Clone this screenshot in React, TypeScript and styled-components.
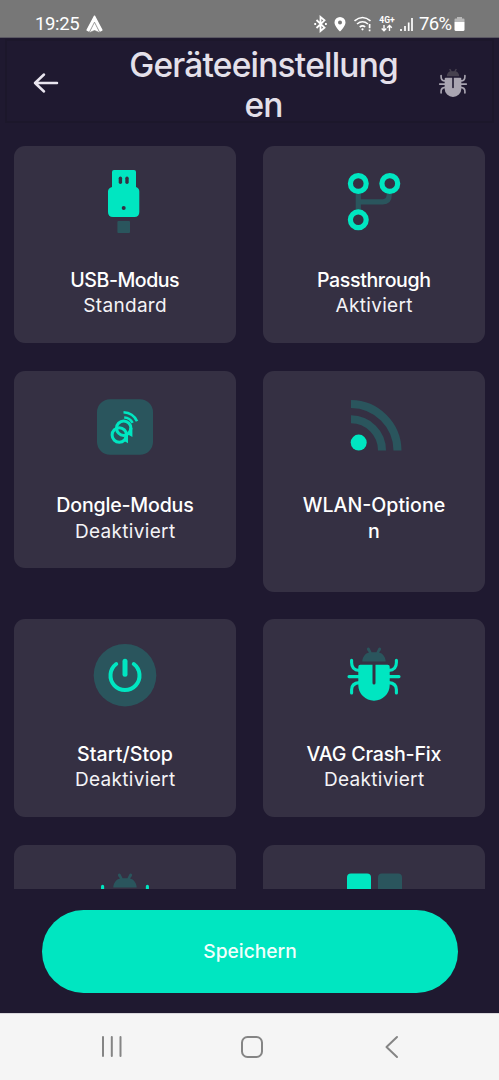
import React from 'react';
import styled, { createGlobalStyle } from 'styled-components';

const TEAL = '#00e6c1';
const DIM = '#2a555d';
const CARD = '#353043';
const BG = '#1f1930';

const Global = createGlobalStyle`
  * { box-sizing: border-box; }
  html, body { margin: 0; padding: 0; background: ${BG}; overflow: hidden; }
  svg { display: block; flex: none; }
`;

const Screen = styled.div`
  width: 499px;
  height: 1080px;
  display: flex;
  flex-direction: column;
  background: ${BG};
  color: #fff;
  font-family: Inter, 'Open Sans', sans-serif;
  overflow: hidden;
`;

const StatusBar = styled.div`
  height: 38px;
  flex: none;
  display: flex;
  align-items: center;
  padding: 10px 34px 0 35px;
  background: #777;
  border-bottom: 1px solid #5a5862;
  font-family: Roboto, sans-serif;
  font-size: 18.5px;
  line-height: 24px;
`;

const Clock = styled.span`
  width: 51px;
  letter-spacing: -0.35px;
  white-space: nowrap;
`;

const StatusGroup = styled.div`
  margin-left: auto;
  display: flex;
  align-items: center;
`;

const Battery = styled.span`
  width: 35px;
  margin-left: 4px;
  letter-spacing: -0.6px;
  white-space: nowrap;
`;

const Header = styled.header`
  height: 84px;
  margin: 1px 5px 0;
  flex: none;
  display: flex;
  align-items: center;
  border: 2px solid #1c172b;
  padding: 4px 22px 0 24px;
`;

const IconButton = styled.button`
  border: 0;
  padding: 0;
  background: none;
  flex: none;
`;

const Title = styled.h1`
  flex: 1;
  margin: 0;
  padding: 5px 0 0 31px;
  display: flex;
  flex-direction: column;
  align-items: center;
  color: #e4e0ea;
  font-size: 33.5px;
  font-weight: 500;
  line-height: 39.5px;
`;

const TextLine = styled.span<{ $ls?: number }>`
  display: block;
  white-space: nowrap;
  letter-spacing: ${p => p.$ls ?? 0}px;
  margin-right: ${p => -(p.$ls ?? 0)}px;
`;

const Scroller = styled.main`
  height: 765.7px;
  flex: none;
  overflow: hidden;
  padding: 22.52px 14px 0;
`;

const Grid = styled.div`
  display: grid;
  grid-template-columns: 222px 222px;
  column-gap: 27px;
  row-gap: 27.6px;
  align-items: start;
`;

const Card = styled.section<{ $tall?: boolean }>`
  height: ${p => (p.$tall ? 221 : 197.7)}px;
  border-radius: 11px;
  background: ${CARD};
  display: flex;
  flex-direction: column;
  align-items: center;
  padding-top: 22px;
`;

const Name = styled.div`
  margin-top: 36.3px;
  display: flex;
  flex-direction: column;
  align-items: center;
  font-size: 19.6px;
  font-weight: 500;
  line-height: 25.5px;
`;

const State = styled.div`
  font-size: 19px;
  font-weight: 400;
  line-height: 25.5px;
  color: #f4f3f6;
`;

const Footer = styled.footer`
  height: 124.6px;
  flex: none;
  padding: 20.9px 42px 0;
`;

const SaveButton = styled.button`
  display: flex;
  align-items: center;
  justify-content: center;
  width: 416px;
  height: 83px;
  padding: 0 0 1px;
  border: 0;
  border-radius: 42px;
  background: ${TEAL};
  color: #f2fffc;
  font: 500 19.2px Inter, sans-serif;
`;

const NavBar = styled.nav`
  flex: 1;
  background: #f5f5f5;
  border-top: 1px solid #d9d7dc;
  display: flex;
  align-items: center;
  justify-content: space-between;
  padding: 0 99px 0 100px;
`;

const HomeIcon = styled.svg`
  margin-right: 5px;
`;

const Bug = ({ size = 64, body = TEAL, head = DIM, drop = 2 }) => (
  <svg width={size} height={size} viewBox={`0 ${-drop} 64 64`} fill="none" overflow="visible">
    <path d="M20.300 18.600c0-4.500 3-8.300 6.700-9.100l-1.900-2.600a1.300 1.300 0 0 1 2.500-1.600l2 4h4.800l2-4a1.300 1.300 0 0 1 2.500 1.600L37 9.500c3.700.8 6.700 4.600 6.700 9.100z" fill={head} />
    <path d="M18.300 21.700q-2 0-2 2V42a15.700 15.700 0 0 0 31.400 0V23.700q0-2-2-2H33.500V40a1.500 1.500 0 0 1-3 0V21.700z" fill={body} />
    <path d="M9.600 17.200v2.200q0 7.600 7.700 8M54.400 17.200v2.200q0 7.600-7.700 8M7 33.600h11M57 33.600H46M9.600 50v-3.200q0-6.600 7.700-7.200M54.400 50v-3.200q0-6.600-7.700-7.200" stroke={body} strokeWidth="3.100" strokeLinecap="round" />
  </svg>
);

const Usb = () => (
  <svg width="64" height="64" viewBox="0 0 64 64" overflow="visible">
    <path d="M21 2h20q2 0 2 2v15q3.300 1 3.300 4.500V44q0 5-5 5H20q-5 0-5-5V23.500q0-3.500 4-4.500V4q0-2 2-2z" fill={TEAL} />
    <rect x="25.700" y="8.500" width="3.400" height="7.500" rx="1.700" fill={CARD} />
    <rect x="32.300" y="8.500" width="3.400" height="7.500" rx="1.700" fill={CARD} />
    <circle cx="30.700" cy="40" r="2" fill={CARD} />
    <rect x="24.400" y="53" width="12.600" height="12" rx="1" fill={DIM} />
  </svg>
);

const Branch = () => (
  <svg width="64" height="64" viewBox="0 0 64 64" fill="none">
    <path d="M16.300 24v18M16.300 33.800h24.500q6.500 0 6.500-7.500V25" stroke={DIM} strokeWidth="5.200" />
    <g stroke={TEAL} strokeWidth="5.200">
      <circle cx="16.300" cy="15.500" r="7.900" />
      <circle cx="47.800" cy="15.500" r="7.900" />
      <circle cx="16.300" cy="51.800" r="7.900" />
    </g>
  </svg>
);

const Dongle = () => (
  <svg width="64" height="64" viewBox="0 0 64 64" fill="none">
    <rect x="4" y="6.300" width="56" height="55.500" rx="13" fill={DIM} />
    <g stroke={TEAL} strokeWidth="3">
      <circle cx="30.700" cy="35.200" r="7.200" />
      <circle cx="26.300" cy="42" r="7.200" />
      <path d="M30.500 19.300A15.500 15.500 0 0 1 44 28.300" strokeWidth="2.600" />
      <path d="M31.200 24.500a10 10 0 0 1 8.400 5.300" strokeWidth="2.600" />
    </g>
    <path d="M36.400 35h3v9l-4.500-2.600zM32 42h3v8.300l-4.500-2.800z" fill={TEAL} />
  </svg>
);

const Wlan = () => (
  <svg width="64" height="64" viewBox="0 0 64 64" fill="none">
    <path d="M9 11a47 47 0 0 1 46.500 46.500M9 26.300a31.200 31.200 0 0 1 31 31.200" stroke={DIM} strokeWidth="8" />
    <circle cx="16.700" cy="49.600" r="8" fill={TEAL} />
  </svg>
);

const Power = () => (
  <svg width="64" height="64" viewBox="0 -0.7 64 64" fill="none" overflow="visible">
    <circle cx="32" cy="33.500" r="31.300" fill={DIM} />
    <path d="M23.200 22.300a14.500 14.500 0 1 0 17.600 0" stroke={TEAL} strokeWidth="4" strokeLinecap="round" />
    <path d="M32 19.500v13" stroke={TEAL} strokeWidth="5" strokeLinecap="round" />
  </svg>
);

const Tiles = () => (
  <svg width="64" height="64" viewBox="0 0 64 64">
    <rect x="5" y="6.500" width="24" height="24" rx="4" fill={TEAL} />
    <rect x="36" y="6.500" width="24" height="24" rx="4" fill={DIM} />
    <rect x="5" y="37" width="24" height="24" rx="4" fill={DIM} />
    <rect x="36" y="37" width="24" height="24" rx="4" fill={TEAL} />
  </svg>
);

type Item = { icon: React.ReactNode; name: [string, number][]; state?: [string, number]; tall?: boolean };

const items: Item[] = [
  { icon: <Usb />, name: [['USB-Modus', -0.5]], state: ['Standard', 0.3] },
  { icon: <Branch />, name: [['Passthrough', -0.4]], state: ['Aktiviert', 0.3] },
  { icon: <Dongle />, name: [['Dongle-Modus', -0.2]], state: ['Deaktiviert', 0.33] },
  { icon: <Wlan />, name: [['WLAN-Optione', 0], ['n', 0]], tall: true },
  { icon: <Power />, name: [['Start/Stop', 0.05]], state: ['Deaktiviert', 0.33] },
  { icon: <Bug />, name: [['VAG Crash-Fix', -0.2]], state: ['Deaktiviert', 0.33] },
  { icon: <Bug />, name: [] },
  { icon: <Tiles />, name: [] },
];

const StatusIcons = () => (
  <svg width="102" height="18" viewBox="312 15 102 18" fill="none" stroke="#fff">
    <path d="M315.500 20l8 7.700-4 3.300V17l4 3.300-8 7.700" strokeWidth="1.800" />
    <path d="M313.300 24h1.800M324 24h1.800" strokeWidth="2" />
    <path fillRule="evenodd" d="M339 17a5.500 5.500 0 0 0-5.500 5.500c0 4 5.500 9 5.500 9s5.500-5 5.500-9A5.500 5.500 0 0 0 339 17zm0 3.600a2 2 0 1 1 0 4 2 2 0 0 1 0-4z" fill="#fff" stroke="none" />
    <path d="M353.500 20.800q8-6.600 16 0M356 24q5.500-4.400 11 0M358.700 27q3-2.200 5.500 0" strokeWidth="1.600" />
    <circle cx="361.500" cy="29.300" r="1.100" fill="#fff" stroke="none" />
    <path d="M368.600 24v4.300M368.600 29.500v1.700" strokeWidth="1.700" />
    <text x="378.300" y="23.300" fill="#fff" stroke="none" fontFamily="Roboto, sans-serif" fontWeight="700" fontSize="8.500">4G+</text>
    <path d="M383 25v5.500M380.700 28.500l2.300 2.300 2.300-2.300M388.500 31v-5.500M386.200 27.700l2.300-2.300 2.300 2.300" strokeWidth="1.400" />
    <path d="M400 29v2M404 26v5M407.700 22.500V31M411 18v13" strokeWidth="1.700" />
  </svg>
);

export default function App() {
  return (
    <Screen>
      <Global />
      <StatusBar>
        <Clock>19:25</Clock>
        <svg width="17" height="18" viewBox="0 0 17 18">
          <path d="M8.500 1.200L15.900 15l-2.200 1L8.500 7 3.300 16l-2.200-1z" fill="#fff" stroke="#fff" strokeWidth="1.400" strokeLinejoin="round" />
          <path d="M8.500 7.200l5.400 10.600-5.400-2.300-5.400 2.300z" fill="#fff" stroke="#777" strokeWidth="0.700" />
        </svg>
        <StatusGroup>
          <StatusIcons />
          <Battery>76%</Battery>
          <svg width="11" height="16" viewBox="0 0 11 16">
            <path d="M3 1h5v1.500h1.500q1 0 1 1V6H.5V3.500q0-1 1-1H3z" fill="#b8b8b8" />
            <path d="M.5 6h10v7.500q0 1.500-1.500 1.500H2q-1.500 0-1.500-1.500z" fill="#fff" />
          </svg>
        </StatusGroup>
      </StatusBar>
      <Header>
        <IconButton aria-label="Zurück">
          <svg width="30" height="24" viewBox="0 0 30 24" fill="none" stroke="#e9e5ef" strokeWidth="2.500" strokeLinecap="round" strokeLinejoin="round">
            <path d="M26 12H4M13 3.500L4 12l9 8.500" />
          </svg>
        </IconButton>
        <Title>
          <TextLine $ls={-0.8}>Geräteeinstellung</TextLine>
          <TextLine $ls={-0.8}>en</TextLine>
        </Title>
        <IconButton aria-label="Fehler melden">
          <Bug size={34} body="#a9a5b1" head="#46414f" drop={0.6} />
        </IconButton>
      </Header>
      <Scroller>
        <Grid>
          {items.map((it, i) => (
            <Card key={i} $tall={it.tall}>
              {it.icon}
              <Name>
                {it.name.map(([t, ls]) => <TextLine key={t} $ls={ls}>{t}</TextLine>)}
              </Name>
              {it.state && <State><TextLine $ls={it.state[1]}>{it.state[0]}</TextLine></State>}
            </Card>
          ))}
        </Grid>
      </Scroller>
      <Footer>
        <SaveButton><TextLine>Speichern</TextLine></SaveButton>
      </Footer>
      <NavBar>
        <svg width="24" height="24" viewBox="0 0 24 24" stroke="#858585" strokeWidth="2" strokeLinecap="round">
          <path d="M3 2v19M11.800 2v19M20.500 2v19" />
        </svg>
        <HomeIcon width="24" height="24" viewBox="0 0 24 24" fill="none" stroke="#858585" strokeWidth="2">
          <rect x="2" y="2" width="20" height="20" rx="5.500" />
        </HomeIcon>
        <svg width="16" height="24" viewBox="0 0 16 24" fill="none" stroke="#858585" strokeWidth="2" strokeLinecap="round" strokeLinejoin="round">
          <path d="M13 2L2.500 12 13 22" />
        </svg>
      </NavBar>
    </Screen>
  );
}
